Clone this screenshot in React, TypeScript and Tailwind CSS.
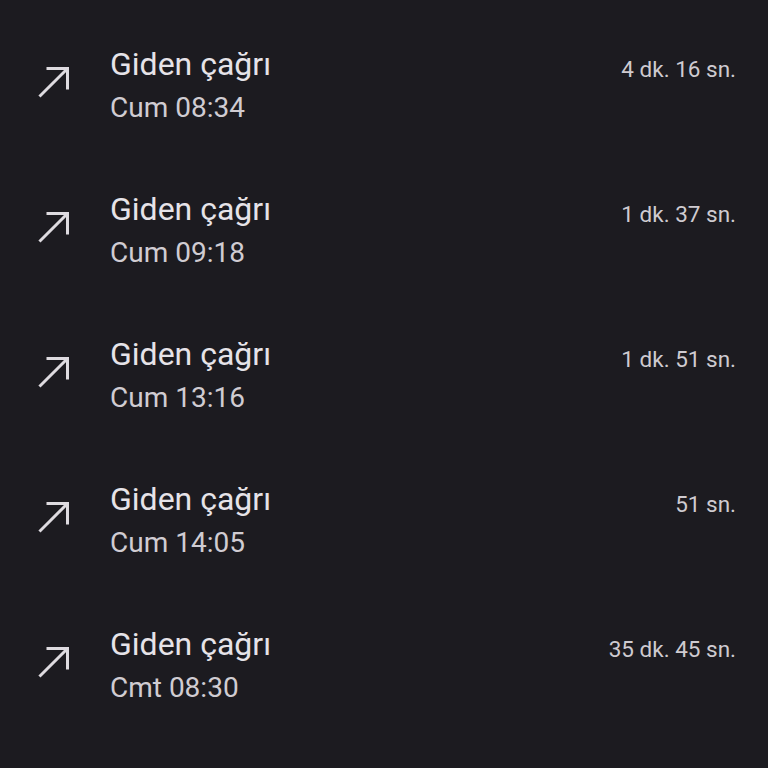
import React from 'react';

interface Call {
	day: string;
	duration: string;
}

const calls: Call[] = [
	{ day: 'Cum 08:34', duration: '4 dk. 16 sn.' },
	{ day: 'Cum 09:18', duration: '1 dk. 37 sn.' },
	{ day: 'Cum 13:16', duration: '1 dk. 51 sn.' },
	{ day: 'Cum 14:05', duration: '51 sn.' },
	{ day: 'Cmt 08:30', duration: '35 dk. 45 sn.' },
];

function OutgoingArrow() {
	return (
		<svg width="32" height="32" viewBox="0 0 32 32" fill="none" stroke="#dedbe0" strokeWidth="3" strokeLinecap="square">
			<line x1="2.5" y1="29.5" x2="29" y2="3" />
			<polyline points="10,2.5 29.5,2.5 29.5,22" />
		</svg>
	);
}

function CallRow({ call }: { call: Call }) {
	return (
		<div className="h-[145px] flex items-center">
			<div className="w-[110px] pl-[38px] flex-shrink-0 -mt-[8px]">
				<OutgoingArrow />
			</div>
			<div className="flex-1 flex flex-col">
				<div className="flex items-baseline justify-between pr-[32px] mt-[2px]">
					<span className="text-[32px] leading-[42px] text-[#e6e3e8]">Giden çağrı</span>
					<span className="text-[22.5px] leading-[42px] text-[#cfcbd0] translate-y-[2px]">{call.duration}</span>
				</div>
				<span className="text-[28px] leading-[44px] text-[#d0ccd2] -mt-[2px]">{call.day}</span>
			</div>
		</div>
	);
}

export default function App() {
	return (
		<div
			className="w-[768px] h-[768px] overflow-hidden bg-[#1c1b20] pt-[13px]"
			style={{ fontFamily: 'Roboto, "Noto Sans", sans-serif' }}
		>
			{calls.map((c, i) => (
				<CallRow key={i} call={c} />
			))}
		</div>
	);
}
